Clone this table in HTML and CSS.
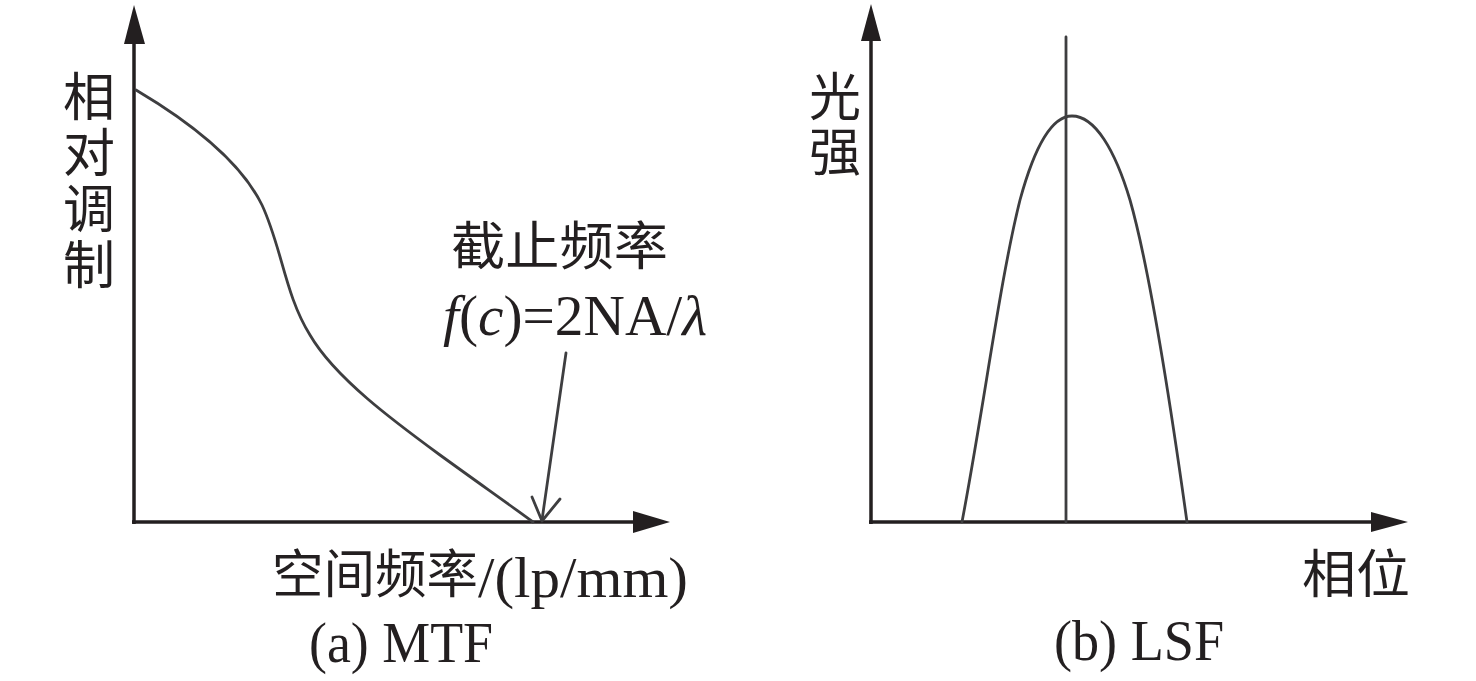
FILE: index.html
```html
<!DOCTYPE html>
<html lang="zh">
<head>
<meta charset="utf-8">
<title>MTF / LSF</title>
<link rel="stylesheet" href="styles.css">
</head>
<body>
<main class="figure-row">
  <figure class="panel">
    <svg class="chart" width="738" height="681" viewBox="0 0 738 681" xmlns="http://www.w3.org/2000/svg">
      <!-- axes -->
      <line class="axis" x1="134" y1="40" x2="134" y2="524"/>
      <polygon class="arrow" points="134,5 124,44 145,44"/>
      <line class="axis" x1="132" y1="522" x2="636" y2="522"/>
      <polygon class="arrow" points="670,522 633,511 633,533"/>
      <!-- MTF curve -->
      <path class="curve" d="M136,90 C190,122 240,160 262,205 C282,248 285,295 310,335 C335,378 395,422 440,455 C480,484 510,505 533,522"/>
      <!-- pointer arrow -->
      <path class="curve" d="M566,353 L542,520"/>
      <path class="curve" d="M532,497 L542,521 L560,499"/>
      <!-- y label -->
      <text class="cjk vertical" x="89" y="70">相对调制</text>
      <!-- cutoff -->
      <text class="cjk" x="451" y="265" textLength="217" lengthAdjust="spacingAndGlyphs">截止频率</text>
      <text class="latin" x="443" y="335" textLength="264" lengthAdjust="spacingAndGlyphs"><tspan class="it">f</tspan>(<tspan class="it">c</tspan>)=2NA/<tspan class="it">λ</tspan></text>
      <!-- x label -->
      <text class="cjk" x="272" y="593" textLength="206" lengthAdjust="spacingAndGlyphs">空间频率</text>
      <text class="latin" x="478" y="597" textLength="210" lengthAdjust="spacingAndGlyphs">/(lp/mm)</text>
      <!-- caption -->
      <text class="latin" x="309" y="662" textLength="184" lengthAdjust="spacingAndGlyphs">(a) MTF</text>
    </svg>
  </figure>
  <figure class="panel">
    <svg class="chart" width="738" height="681" viewBox="738 0 738 681" xmlns="http://www.w3.org/2000/svg">
      <!-- axes -->
      <line class="axis" x1="871" y1="38" x2="871" y2="524"/>
      <polygon class="arrow" points="871,4 861,41 881,41"/>
      <line class="axis" x1="869" y1="522" x2="1374" y2="522"/>
      <polygon class="arrow" points="1408,522 1371,512 1371,532"/>
      <!-- center line -->
      <line class="curve" x1="1066" y1="37" x2="1066" y2="522"/>
      <!-- LSF curve -->
      <path class="curve" d="M962,522 C985,400 1000,280 1020,200 C1035,145 1052,116 1072,116 C1095,116 1115,150 1130,200 C1150,270 1170,400 1187,522"/>
      <!-- y label -->
      <text class="cjk vertical vertical-tight" x="835" y="70">光强</text>
      <!-- x label -->
      <text class="cjk" x="1302" y="593" textLength="108" lengthAdjust="spacingAndGlyphs">相位</text>
      <!-- caption -->
      <text class="latin" x="1054" y="660" textLength="170" lengthAdjust="spacingAndGlyphs">(b) LSF</text>
    </svg>
  </figure>
</main>
</body>
</html>
```

FILE: styles.css
```css
html, body {
  margin: 0;
  padding: 0;
  background: #ffffff;
}

.figure-row {
  display: flex;
  flex-direction: row;
  width: 1476px;
  height: 681px;
  overflow: hidden;
}

.panel {
  margin: 0;
  width: 738px;
  height: 681px;
  flex: 0 0 738px;
}

.chart {
  display: block;
}

.axis {
  stroke: #231f20;
  stroke-width: 3.5;
}

.arrow {
  fill: #231f20;
  stroke: none;
}

.curve {
  fill: none;
  stroke: #3e3e40;
  stroke-width: 2.8;
  stroke-linecap: round;
  stroke-linejoin: round;
}

.cjk {
  font-family: "Noto Sans CJK SC", sans-serif;
  font-weight: 400;
  font-size: 52px;
  fill: #231f20;
}

.vertical {
  writing-mode: vertical-rl;
  text-orientation: upright;
  letter-spacing: 4px;
}

.vertical-tight {
  letter-spacing: 3px;
}

.latin {
  font-family: "Liberation Serif", "Times New Roman", serif;
  font-size: 57px;
  fill: #231f20;
}

.it {
  font-style: italic;
}
```
